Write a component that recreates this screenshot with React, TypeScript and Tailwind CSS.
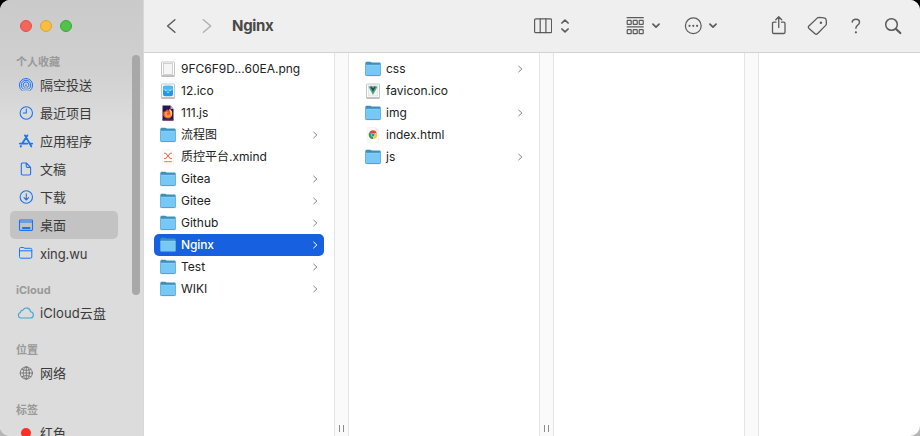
import type { ReactNode } from 'react';

const line = {
  fill: 'none',
  stroke: 'currentColor',
  strokeLinecap: 'round' as const,
  strokeLinejoin: 'round' as const,
};

function Chevron({ className }: { className: string }) {
  return (
    <svg viewBox="0 0 5 8" className={`h-2 w-[5px] ${className}`} {...line} strokeWidth="1">
      <path d="M.7 1.100 3.900 4 .7 6.900" />
    </svg>
  );
}

function Folder() {
  return (
    <svg viewBox="0 0 16 16" className="h-4 w-4">
      <path d="M.3 2.300C.3 1.300.8.700 1.800.7h3.400c1 0 1.300.9 2.100.9h6.900c1 0 1.500.5 1.500 1.400V13H.3z" fill="#3e90bb" />
      <path d="M.3 4h15.400v9.600c0 .8-.4 1.200-1.200 1.200h-13c-.8 0-1.200-.4-1.200-1.200z" fill="#78c8f6" />
      <path d="M.5 4.200h15" stroke="#95d8fa" strokeWidth=".6" />
      <path d="M.4 13.400c0 .8.4 1.200 1.100 1.200h13c.7 0 1.100-.4 1.100-1.200" fill="none" stroke="#4796c0" strokeWidth=".9" />
      <path d="M.5 4v9.500M15.500 4v9.500" stroke="#58a8d0" strokeWidth=".5" />
    </svg>
  );
}

function ImageFrame({ children }: { children?: ReactNode }) {
  return (
    <svg viewBox="0 0 16 16" className="h-4 w-4">
      <rect x="1.500" y="1" width="13" height="13.900" rx=".9" fill="#fff" stroke="#c0c0c0" strokeWidth=".9" />
      {children}
      <path d="M1.500 15.100h13" stroke="#8f8f8f" strokeWidth=".8" />
    </svg>
  );
}

const fileIcons: Record<string, ReactNode> = {
  folder: <Folder />,
  png: (
    <ImageFrame>
      <rect x="3.500" y="2.500" width="9" height="11" fill="#f5f5f5" stroke="#c8c8c8" strokeWidth=".8" />
    </ImageFrame>
  ),
  ico: (
    <ImageFrame>
      <rect x="3" y="2.800" width="10" height="10.400" rx="1.800" fill="#2497ed" />
      <path d="M3 4.800a2 2 0 0 1 2-2h6a2 2 0 0 1 2 2V7L8 9 3 7z" fill="#47bdf4" />
      <path d="m4.600 6 1.200 2 1.300-1.400M11.400 6l-1.200 2-1.300-1.400M6.800 9.700h2.400" fill="none" stroke="#b5eaff" strokeWidth=".8" />
    </ImageFrame>
  ),
  firefox: (
    <svg viewBox="0 0 16 16" className="h-4 w-4">
      <path d="M2.500.5h8L13.500 4v11.500h-11z" fill="#29174e" />
      <path d="M10.500.5V4h3" fill="#b9a4cb" />
      <path d="M3.900 6.200 5 6.800 7.200 4.300l1 1.500L9.500 4c3.500 2 4.300 9.500-1.500 9.500-4.600 0-5.600-4.200-4.100-7.300" fill="#f35645" />
      <path d="M5 7c1-.5 2-.3 2.900.4L6.600 9c.6 1.600 3.400 1.700 3.800-.2.300-1.400-.8-2.600-.9-4.800 4 2.300 3.500 8-1.400 8.500C5.500 12.400 4.200 10 5 7" fill="#ffa12c" />
      <path d="M9.500 4c3.300 2 3.200 5.200 1.600 7C11.400 8 9.800 7 9.500 4" fill="#ffd54c" />
      <path d="M2.500 14.300h11v1.200h-11z" fill="#6b1f55" />
    </svg>
  ),
  xmind: (
    <svg viewBox="0 0 16 16" className="h-4 w-4">
      <path d="M2.500.7h8.200l2.800 2.800v11.800h-11z" fill="#fcfbfa" stroke="#f0f0f0" strokeWidth=".6" />
      <path d="M4 4.200h1.600l4.800 5.300H12M12 4.200h-1.600L5.600 9.500H4" fill="none" stroke="#e8775c" strokeWidth="1.100" />
      <path d="M4.200 12.600h7.600" stroke="#eb907a" strokeWidth="1.200" />
    </svg>
  ),
  vue: (
    <ImageFrame>
      <rect x="3.200" y="2.800" width="9.600" height="10.200" fill="#f2f3f2" stroke="#d2d6d4" strokeWidth=".5" />
      <path d="M3.400 3.500h9.200L8 12z" fill="#4ba783" />
      <path d="M5.200 3.500h5.600L8 8.700z" fill="#30475a" />
      <path d="M7.100 3.500h1.800L8 5.100z" fill="#f6f8f7" />
    </ImageFrame>
  ),
  chrome: (
    <svg viewBox="0 0 16 16" className="h-4 w-4">
      <path d="M2.400.6h8.400l2.800 2.800v12H2.400z" fill="#fdfdfd" stroke="#ededed" strokeWidth=".6" />
      <path d="M10.800.6v2.800h2.800" fill="#eee" stroke="#ddd" strokeWidth=".5" />
      <path d="M8 7.700 4.200 5.600a4.300 4.300 0 0 1 7.600 0z" fill="#d8483b" />
      <path d="M8 7.700 4.200 5.600A4.300 4.300 0 0 0 8 12z" fill="#349a56" />
      <path d="M8 7.700 11.800 5.600A4.300 4.300 0 0 1 8 12z" fill="#f4c945" />
      <circle cx="8" cy="7.800" r="1.900" fill="#eef3fb" />
      <circle cx="8" cy="7.800" r="1.600" fill="#477fd0" />
    </svg>
  ),
};

type Entry = { name: string; icon: string };

const desktop: Entry[] = [
  { name: '9FC6F9D...60EA.png', icon: 'png' },
  { name: '12.ico', icon: 'ico' },
  { name: '111.js', icon: 'firefox' },
  { name: '流程图', icon: 'folder' },
  { name: '质控平台.xmind', icon: 'xmind' },
  { name: 'Gitea', icon: 'folder' },
  { name: 'Gitee', icon: 'folder' },
  { name: 'Github', icon: 'folder' },
  { name: 'Nginx', icon: 'folder' },
  { name: 'Test', icon: 'folder' },
  { name: 'WIKI', icon: 'folder' },
];

const nginx: Entry[] = [
  { name: 'css', icon: 'folder' },
  { name: 'favicon.ico', icon: 'vue' },
  { name: 'img', icon: 'folder' },
  { name: 'index.html', icon: 'chrome' },
  { name: 'js', icon: 'folder' },
];

function Column({ entries, selected, className }: { entries: Entry[]; selected?: string; className: string }) {
  return (
    <div className={`shrink-0 pt-[5px] ${className}`}>
      {entries.map((e) => {
        const active = e.name === selected;
        return (
          <div
            key={e.name}
            className={`flex h-[22px] items-center rounded-[5px] pr-1.5 pl-1.5 ${active ? 'bg-[#1760df] text-white' : 'text-[#222]'}`}
          >
            {fileIcons[e.icon]}
            <span className={`ml-[5px] flex-1 text-[12px] leading-[22px] whitespace-nowrap ${active ? 'font-medium tracking-[-0.1px]' : ''}`}>
              {e.name}
            </span>
            {e.icon === 'folder' && <Chevron className={active ? 'text-white' : 'text-[#868686]'} />}
          </div>
        );
      })}
    </div>
  );
}

function Divider({ grip }: { grip?: boolean }) {
  return (
    <div className="flex w-[15px] shrink-0 items-end justify-center gap-[3px] border-x border-[#e4e4e4] bg-[#fafafa] pb-1">
      {grip && (
        <>
          <i className="h-[7px] w-px bg-[#8c8c8c]" />
          <i className="h-[7px] w-px bg-[#8c8c8c]" />
        </>
      )}
    </div>
  );
}

const sideIcon = 'h-4 w-4 text-[#1c74ee]';

type SideItem = { label: string; icon: ReactNode; textClass?: string };

const groups: { title: string; items: SideItem[] }[] = [
  {
    title: '个人收藏',
    items: [
      {
        label: '隔空投送',
        icon: (
          <svg viewBox="0 0 16 16" className={sideIcon} {...line} strokeWidth="1">
            <path d="M4 13.600a6.700 6.700 0 1 1 8 0M5 11.800a4.800 4.800 0 1 1 6 0M6.100 10.100a2.900 2.900 0 1 1 3.800 0" />
            <path d="M8 7.400 6.900 8.700 4.600 13.800h6.800L9.100 8.700z" fill="currentColor" stroke="none" opacity=".3" />
            <circle cx="8" cy="8" r=".8" fill="currentColor" stroke="none" />
          </svg>
        ),
      },
      {
        label: '最近项目',
        icon: (
          <svg viewBox="0 0 16 16" className={sideIcon} {...line} strokeWidth="1.100">
            <circle cx="8.300" cy="8" r="6.200" />
            <path d="M8.300 4.100V8H5.200" />
          </svg>
        ),
      },
      {
        label: '应用程序',
        icon: (
          <svg viewBox="0 0 16 16" className={sideIcon} {...line} strokeWidth="1.900">
            <path d="m9.300 2.400-5 8.200M7 2.400l6.300 11M1.900 10.600h7.400M12.200 10.600h2M3 13.100l-.3.5" />
          </svg>
        ),
      },
      {
        label: '文稿',
        icon: (
          <svg viewBox="0 0 16 16" className={sideIcon} {...line} strokeWidth="1.100">
            <path d="M4.200 2h4.100l4.300 4.300v6.500c0 .8-.4 1.200-1.200 1.200H4.600c-.9 0-1.300-.4-1.300-1.200V3c0-.6.3-1 .9-1zM8.200 2.200V5c0 1 .4 1.400 1.300 1.400h3" />
          </svg>
        ),
      },
      {
        label: '下载',
        icon: (
          <svg viewBox="0 0 16 16" className={sideIcon} {...line} strokeWidth="1.100">
            <circle cx="8.300" cy="8" r="6.200" />
            <path d="M8.300 4.800v6.100M6 8.700l2.300 2.300 2.300-2.300" />
          </svg>
        ),
      },
      {
        label: '桌面',
        icon: (
          <svg viewBox="0 0 16 16" className={sideIcon} {...line} strokeWidth="1.100">
            <rect x="1.500" y="3" width="13" height="10.400" rx=".8" />
            <path d="M1.500 5h13" />
            <path d="M4.800 11h6.800" strokeWidth="1.800" />
          </svg>
        ),
      },
      {
        label: 'xing.wu',
        textClass: 'tracking-[-0.1px] pt-px',
        icon: (
          <svg viewBox="0 0 16 16" className={sideIcon} {...line} strokeWidth="1">
            <path d="M1.500 3.700c0-.8.4-1.200 1.200-1.200h2.500c.8 0 1 .8 1.700.8h5.500c.9 0 1.400.4 1.400 1.200v7.500c0 .8-.4 1.200-1.200 1.200H2.700c-.8 0-1.200-.4-1.200-1.200zM1.500 5.800h12.300" />
          </svg>
        ),
      },
    ],
  },
  {
    title: 'iCloud',
    items: [
      {
        label: 'iCloud云盘',
        textClass: 'tracking-[0.1px]',
        icon: (
          <svg viewBox="0 0 16 16" className="h-4 w-4 overflow-visible text-[#46a4d0]" {...line} strokeWidth="1.100">
            <path d="M3 13a2.800 2.800 0 0 1-.5-5.500A2.400 2.400 0 0 1 5 5.100a4 4 0 0 1 7.500 1.600A3.200 3.200 0 0 1 12.900 13z" />
          </svg>
        ),
      },
    ],
  },
  {
    title: '位置',
    items: [
      {
        label: '网络',
        icon: (
          <svg viewBox="0 0 16 16" className="h-4 w-4 text-[#696969]" {...line} strokeWidth=".8">
            <circle cx="8.300" cy="8" r="6.100" />
            <path d="M8.300 1.900v12.200M2.200 8h12.200M3.700 4.200c2.500 1.700 6.700 1.700 9.200 0M3.700 11.800c2.500-1.700 6.700-1.700 9.200 0" />
            <ellipse cx="8.300" cy="8" rx="3.100" ry="6.100" />
          </svg>
        ),
      },
    ],
  },
  {
    title: '标签',
    items: [{ label: '红色', icon: <span className="mx-[3px] h-2.5 w-2.5 rounded-full bg-[#fb2f27]" /> }],
  },
];

function Sidebar() {
  return (
    <aside className="relative flex w-36 shrink-0 flex-col overflow-hidden border-r border-[#d8d8d8] bg-linear-to-b from-[#cacaca] via-[#d0d0d0] via-[16%] to-[#dcdcdc] to-[28%]">
      <div className="flex h-[52px] shrink-0 items-center gap-2 pl-5">
        <span className="h-3 w-3 rounded-full border border-[#df5149] bg-[#f5655a]" />
        <span className="h-3 w-3 rounded-full border border-[#dda33a] bg-[#f7be40]" />
        <span className="h-3 w-3 rounded-full border border-[#3da53c] bg-[#51c24c]" />
      </div>
      {groups.map((g, i) => (
        <section key={g.title} className={i ? 'mt-[13px]' : ''}>
          <h2 className="h-[19px] pl-4 text-[11px] leading-5 font-bold text-[#999]">{g.title}</h2>
          {g.items.map((item) => (
            <div
              key={item.label}
              className={`ml-2.5 flex h-7 w-[108px] items-center gap-1.5 rounded-[5px] pl-2 ${item.label === '桌面' ? 'bg-[#c3c3c3]' : ''}`}
            >
              {item.icon}
              <span className={`text-[13px] leading-7 whitespace-nowrap text-[#3a3a3a] ${item.textClass ?? ''}`}>{item.label}</span>
            </div>
          ))}
        </section>
      ))}
      <div className="absolute top-[55px] left-[132px] h-60 w-2 rounded-full bg-[#a8a8a8]" />
    </aside>
  );
}

function DownCaret({ className }: { className: string }) {
  return (
    <svg viewBox="0 0 8 6" className={`h-1.5 w-2 overflow-visible ${className}`} {...line} strokeWidth="1.700">
      <path d="M.9 1.200 4 4.200l3.100-3" />
    </svg>
  );
}

function Toolbar() {
  return (
    <header className="flex h-[53px] shrink-0 items-center border-b border-[#d2d2d2] bg-[#efefef] text-[#5b5b5b]">
      <svg viewBox="0 0 10 16" className="ml-[22px] h-4 w-2.5" {...line} strokeWidth="1.500">
        <path d="M8.900 1.700 1.600 8l7.300 6.300" />
      </svg>
      <svg viewBox="0 0 10 16" className="ml-[26px] h-4 w-2.5 text-[#b0b0b0]" {...line} strokeWidth="1.500">
        <path d="M1.400 1.700 8.700 8l-7.300 6.300" />
      </svg>
      <h1 className="ml-5 w-[302px] text-[15px] font-bold tracking-[-0.3px] text-[#494949]">Nginx</h1>
      <svg viewBox="0 0 18 16" className="h-4 w-[18px]" {...line} strokeWidth="1.200">
        <rect x=".6" y=".9" width="17" height="13.800" rx="1.300" />
        <path d="M6.200.9v13.800M11.900.9v13.800" />
      </svg>
      <svg viewBox="0 0 8 14" className="ml-[9px] h-3.5 w-2 overflow-visible" {...line} strokeWidth="1.700">
        <path d="M.9 4 4 1.100 7.100 4M.9 10 4 12.900 7.100 10" />
      </svg>
      <svg viewBox="0 0 18 18" className="ml-[57px] h-[18px] w-[18px]" {...line} strokeWidth="1.200">
        <path d="M1.100.7h16.200M1.100 9.800h16.200" />
        {[1.2, 7.2, 13.2].map((x) => (
          <g key={x}>
            <rect x={x} y="3.400" width="4" height="4" rx=".5" />
            <rect x={x} y="12.700" width="4" height="4" rx=".5" />
          </g>
        ))}
      </svg>
      <DownCaret className="ml-2" />
      <svg viewBox="0 0 18 18" className="ml-6 h-[18px] w-[18px]" {...line} strokeWidth="1.200">
        <circle cx="9.300" cy="8.800" r="7.900" />
        <g fill="currentColor" stroke="none">
          <circle cx="5.500" cy="8.800" r="1.100" />
          <circle cx="9.300" cy="8.800" r="1.100" />
          <circle cx="13.100" cy="8.800" r="1.100" />
        </g>
      </svg>
      <DownCaret className="ml-[7px]" />
      <svg viewBox="0 0 16 20" className="ml-[54px] h-5 w-4" {...line} strokeWidth="1.300">
        <path d="M5 6.200H2.800c-.9 0-1.300.4-1.300 1.300v8.700c0 .9.4 1.300 1.300 1.300h9.900c.9 0 1.300-.4 1.300-1.300V7.500c0-.9-.4-1.300-1.300-1.300h-2.200M7.750 11.500V.9M4.800 3.700 7.750.8l2.950 2.900" />
      </svg>
      <svg viewBox="0 0 20 20" className="ml-5 h-5 w-5" {...line} strokeWidth="1.300">
        <path d="M12.200 1.400 17 1.800c1.400.1 2.100.8 2.200 2.200l.2 3.400c0 .9-.2 1.400-.7 2l-8.300 8.300c-.8.8-1.600.8-2.400 0l-6-5.300c-.9-.8-.9-1.600-.1-2.400l8.300-7.900c.6-.5 1.100-.7 2-.7z" />
        <circle cx="13.900" cy="6.700" r="1.200" fill="currentColor" stroke="none" />
      </svg>
      <svg viewBox="0 0 10 16" className="ml-6 h-4 w-2.5" {...line} strokeWidth="1.400">
        <path d="M1.200 4.100C1.400 2.300 2.700 1.200 4.900 1.200c2.200 0 3.600 1.200 3.600 3 0 1.600-.9 2.300-2 3.100-1.200.8-1.600 1.400-1.600 2.900" />
        <circle cx="4.900" cy="14.300" r="1.100" fill="currentColor" stroke="none" />
      </svg>
      <svg viewBox="0 0 18 18" className="ml-[23px] h-[18px] w-[18px]" {...line} strokeWidth="1.500">
        <circle cx="7.500" cy="7.500" r="5.800" />
        <path d="m12 12 4.300 4" strokeWidth="2.200" />
      </svg>
    </header>
  );
}

export default function App() {
  return (
    <div className="h-[436px] w-[920px] bg-linear-to-b from-black from-50% to-[#b5b5b5] to-50%">
      <div className="flex h-full overflow-hidden rounded-[10px] bg-white font-[Inter,'Noto_Sans_CJK_SC',sans-serif]">
        <Sidebar />
        <main className="flex min-w-0 flex-1 flex-col">
          <Toolbar />
          <div className="flex min-h-0 flex-1">
            <Column entries={desktop} selected="Nginx" className="w-[190px] px-2.5" />
            <Divider grip />
            <Column entries={nginx} className="w-[190px] px-2.5" />
            <Divider grip />
            <Column entries={[]} className="w-[190px]" />
            <Divider />
          </div>
        </main>
      </div>
    </div>
  );
}
